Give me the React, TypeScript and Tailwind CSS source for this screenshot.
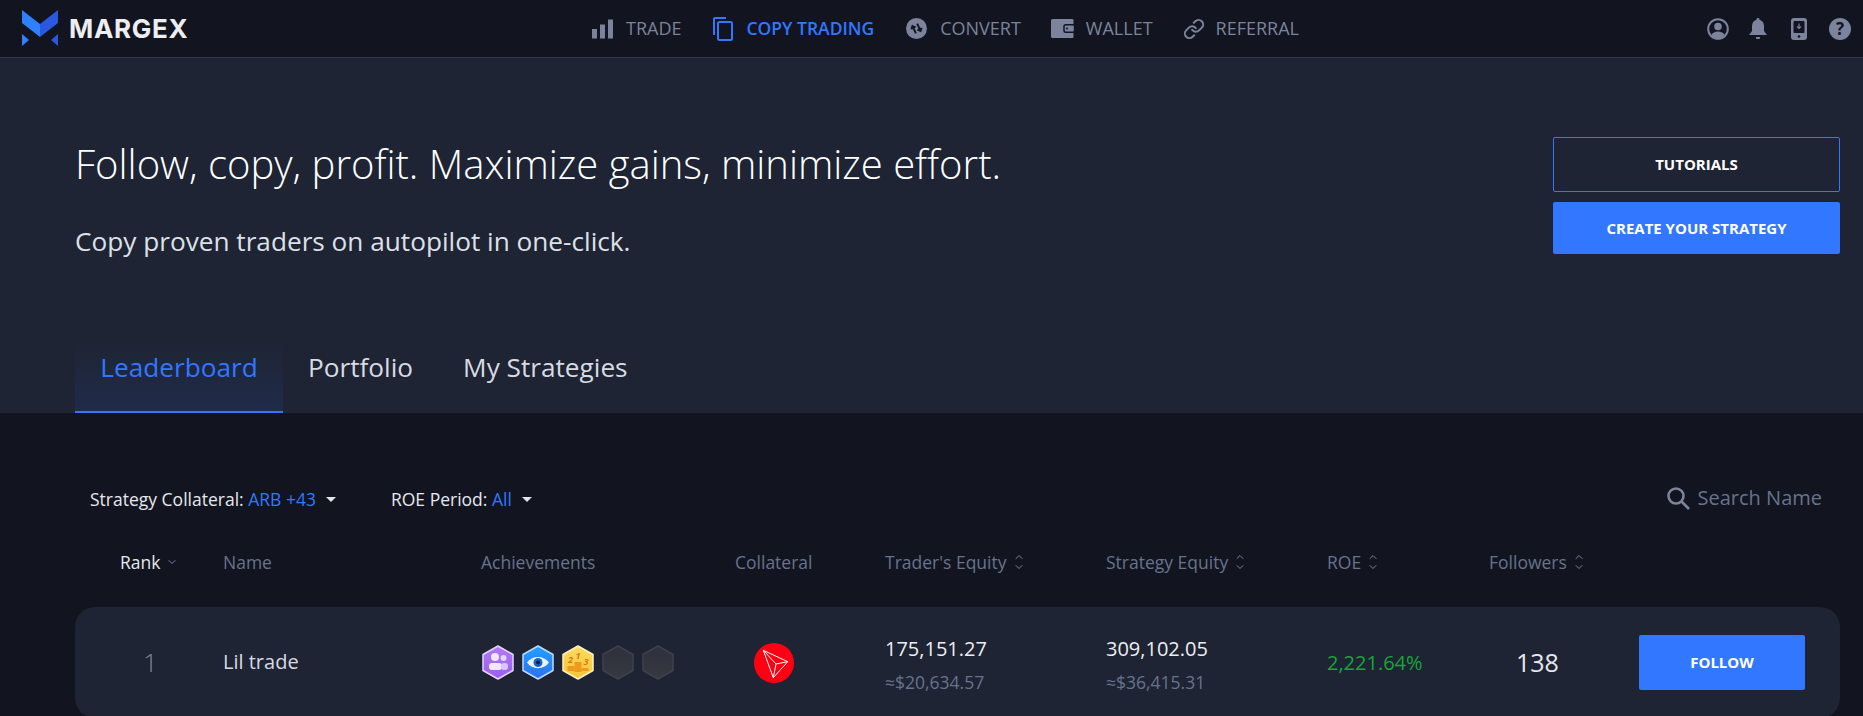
import { ChevronDown, ChevronUp, Link } from 'lucide-react';

const navItems = [
  { label: 'TRADE', icon: <TradeIcon />, spacing: 'gap-[13px]' },
  { label: 'COPY TRADING', icon: <CopyIcon />, active: true, spacing: 'gap-[13px]' },
  { label: 'CONVERT', icon: <ConvertIcon />, spacing: 'gap-[13px]' },
  { label: 'WALLET', icon: <WalletIcon />, spacing: 'gap-[11px] -ml-[2px]' },
  { label: 'REFERRAL', icon: <Link className="w-[22px] h-[22px] text-[#7b849c]" strokeWidth={2.2} />, spacing: 'gap-[11px] -ml-[2px]' },
];

const gridCols = 'grid grid-cols-[148px_258px_254px_150px_221px_221px_162px_150px_1fr] items-center';

function TradeIcon() {
  return (
    <svg width="21" height="20" viewBox="0 0 21 20" fill="#7b849c">
      <rect x="0" y="10" width="5" height="9.500" />
      <rect x="8" y="5.500" width="5" height="14" />
      <rect x="16" y="0.500" width="5" height="19" />
    </svg>
  );
}

function CopyIcon() {
  return (
    <svg width="20" height="24" viewBox="0 0 20 24" fill="none" stroke="#3177ff" strokeWidth="2">
      <path d="M1 18V2a1 1 0 0 1 1-1h11" />
      <rect x="5" y="5" width="14" height="18" rx="1.500" />
    </svg>
  );
}

function ConvertIcon() {
  return (
    <svg width="21" height="21" viewBox="0 0 20 20">
      <circle cx="10" cy="10" r="10" fill="#7b849c" />
      <g transform="rotate(-25 10 10)" fill="none" stroke="#12141f" strokeWidth="1.800">
        <path d="M7.500 14V6.500M5.300 8.600l2.200-2.400 2.200 2.400" />
        <path d="M12.500 6v7.500M10.300 11.400l2.200 2.400 2.200-2.400" />
      </g>
    </svg>
  );
}

function WalletIcon() {
  return (
    <svg width="24" height="19" viewBox="0 0 24 19">
      <path d="M1.500 0H21.500a1 1 0 0 1 1 1V18a1 1 0 0 1-1 1H1.500A1.500 1.500 0 0 1 0 17.500V1.500A1.500 1.500 0 0 1 1.500 0Z" fill="#7b849c" />
      <rect x="13" y="5.800" width="10.500" height="7.400" rx="1.500" fill="#7b849c" stroke="#12141f" strokeWidth="1.500" />
      <circle cx="16" cy="9.500" r="1" fill="#12141f" />
    </svg>
  );
}

function Logo() {
  return (
    <svg width="36" height="37" viewBox="0 0 36 37">
      <path d="M0 0L18 14V27L0 13Z" fill="#2e80ff" />
      <path d="M36 0L18 14V27L36 13Z" fill="#2a58e0" />
      <path d="M0 24L7 30L0 36Z" fill="#2e80ff" />
      <path d="M36 24L29 30L36 36Z" fill="#2a58e0" />
    </svg>
  );
}

function Hexagon({ id, from, to, stroke, children }: { id: string; from: string; to: string; stroke: string; children?: React.ReactNode }) {
  return (
    <svg width="32" height="35" viewBox="0 0 32 35">
      <defs>
        <linearGradient id={id} x1="0" y1="0" x2="0" y2="1">
          <stop offset="0" stopColor={from} />
          <stop offset="1" stopColor={to} />
        </linearGradient>
      </defs>
      <path d="M16 1L31 9.500V25.500L16 34L1 25.500V9.500Z" fill={`url(#${id})`} stroke={stroke} strokeWidth="1.500" strokeLinejoin="round" />
      {children}
    </svg>
  );
}

function SortIcon() {
  return (
    <span className="flex flex-col text-[#7b849c]">
      <ChevronUp className="w-[14px] h-[12px] -mb-[1px]" strokeWidth={2} />
      <ChevronDown className="w-[14px] h-[12px] -mt-[1px]" strokeWidth={2} />
    </span>
  );
}

function Caret() {
  return <span className="ml-[10px] w-0 h-0 border-x-[5px] border-x-transparent border-t-[5px] border-t-[#e2e5ec]" />;
}

function HeaderCell({ label }: { label: string }) {
  return (
    <div className="flex items-center gap-[5px] text-[17.500px] text-[#67738d]">
      {label}
      <SortIcon />
    </div>
  );
}

export default function App() {
  return (
    <div className="h-[716px] overflow-hidden bg-[#12141f] font-['Open_Sans',sans-serif] text-[#e6e8ee]">
      <header className="h-[58px] flex items-center border-b border-[#30374a] relative">
        <div className="flex items-center ml-[22px] gap-[11px]">
          <Logo />
          <span className="font-['Inter',sans-serif] font-bold text-[26px] tracking-[0.700px] text-[#eceef2]">MARGEX</span>
        </div>
        <nav className="absolute left-[592px] top-0 h-[57px] flex items-center gap-[32px]">
          {navItems.map((item) => (
            <div key={item.label} className={`flex items-center ${item.spacing}`}>
              {item.icon}
              <span className={`${item.active ? 'text-[17.500px] text-[#3177ff] font-semibold' : 'text-[18px] text-[#7b849c]'}`}>{item.label}</span>
            </div>
          ))}
        </nav>
        <div className="ml-auto mr-[12px] flex items-center">
          <svg width="22" height="22" viewBox="0 0 22 22">
            <circle cx="11" cy="11" r="9.800" fill="none" stroke="#7b849c" strokeWidth="2" />
            <circle cx="11" cy="8.500" r="3.800" fill="#7b849c" />
            <path d="M4.200 17.500C5.500 14.500 8 13.500 11 13.500s5.500 1 6.800 4A9.800 9.800 0 0 1 4.200 17.500Z" fill="#7b849c" />
          </svg>
          <svg className="ml-[20px]" width="18" height="22" viewBox="0 0 18 22" fill="#7b849c">
            <path d="M9 0a1.500 1.500 0 0 1 1.500 1.700C13.500 2.500 15 5 15 8v5l3 4H0l3-4V8c0-3 1.500-5.500 4.500-6.300A1.500 1.500 0 0 1 9 0Z" />
            <rect x="6.800" y="19" width="4.400" height="2" rx="1" />
          </svg>
          <svg className="ml-[24px]" width="16" height="22" viewBox="0 0 16 22">
            <rect x="0" y="0" width="16" height="22" rx="3" fill="#7b849c" />
            <rect x="2.500" y="3" width="11" height="12" rx="1" fill="#12141f" />
            <path d="M8 5.500V10M6 8.500l2 2 2-2" stroke="#7b849c" strokeWidth="1.200" fill="none" />
            <circle cx="8" cy="18.500" r="1.300" fill="#12141f" />
          </svg>
          <div className="ml-[22px] w-[22px] h-[22px] rounded-full bg-[#7b849c] flex items-center justify-center text-[#12141f] font-bold text-[17px]">?</div>
        </div>
      </header>

      <section className="h-[355px] bg-[#1e2433] pl-[75px] pr-[23px] flex flex-col">
        <div className="flex justify-between pt-[79px]">
          <div>
            <h1 className="text-[40px] font-light leading-[50px] text-white mt-[2px]">Follow, copy, profit. Maximize gains, minimize effort.</h1>
            <p className="text-[26.200px] leading-[36px] mt-[34px] text-[#dde0e7]">Copy proven traders on autopilot in one-click.</p>
          </div>
          <div className="w-[287px] flex flex-col gap-[10px]">
            <button className="h-[55px] border border-[#3177ff] rounded-[2px] text-[15px] font-bold text-white">TUTORIALS</button>
            <button className="h-[52px] bg-[#3177ff] rounded-[2px] text-[15px] font-bold text-white">CREATE YOUR STRATEGY</button>
          </div>
        </div>
        <div className="mt-auto flex items-stretch text-[26.200px] h-[74px]">
          <div className="w-[208px] flex justify-center pt-[9px] text-[#3177ff] border-b-2 border-[#3177ff] bg-gradient-to-b from-[#1e2433] to-[#1f2b49]">Leaderboard</div>
          <div className="ml-[25px] pt-[9px] text-[#d7dae2]">Portfolio</div>
          <div className="ml-[50px] pt-[9px] text-[#d7dae2]">My Strategies</div>
        </div>
      </section>

      <div className="pl-[90px] pr-[41px] pt-[74px] flex items-center h-[98px] text-[17.500px]">
        <span>Strategy Collateral:&nbsp;<span className="text-[#3177ff]">ARB +43</span></span>
        <Caret />
        <span className="ml-[55px]">ROE Period:&nbsp;<span className="text-[#3177ff]">All</span></span>
        <Caret />
        <div className="ml-auto flex items-center gap-[8px] text-[20px] text-[#67738d] -translate-y-[1px]">
          <svg width="24" height="24" viewBox="0 0 24 24" fill="none" stroke="#7b849c" strokeWidth="2.600">
            <circle cx="10" cy="10" r="7.500" />
            <path d="M15.500 15.500L23 23" />
          </svg>
          Search Name
        </div>
      </div>

      <div className={`${gridCols} ml-[75px] mr-[23px] mt-[38px] h-[24px]`}>
        <div className="pl-[45px] flex items-center gap-[6px] text-[17.500px] text-[#e6e8ee]">
          Rank
          <ChevronDown className="w-3 h-3 text-[#7b849c]" />
        </div>
        <div className="text-[17.500px] text-[#67738d]">Name</div>
        <div className="text-[17.500px] text-[#67738d]">Achievements</div>
        <div className="text-[17.500px] text-[#67738d]">Collateral</div>
        <HeaderCell label="Trader's Equity" />
        <HeaderCell label="Strategy Equity" />
        <HeaderCell label="ROE" />
        <HeaderCell label="Followers" />
        <div />
      </div>

      <div className={`${gridCols} ml-[75px] mr-[23px] mt-[34px] h-[111px] rounded-[20px] bg-[#1e2433]`}>
        <div className="pl-[68px] text-[26px] font-light text-[#7b849c]">1</div>
        <div className="text-[20px] text-[#d7dae2] -translate-y-[1px]">Lil trade</div>
        <div className="flex gap-[8px] ml-[1px]">
          <Hexagon id="hexPurple" from="#b27bf8" to="#9a5cf0" stroke="#e6d5ff">
            <circle cx="13" cy="12" r="4" fill="#f1e8ff" />
            <circle cx="21.500" cy="13" r="3" fill="#e3d3ff" />
            <rect x="7" y="18" width="13" height="7" rx="3" fill="#f1e8ff" />
            <rect x="19" y="18" width="7" height="7" rx="3" fill="#d9c5ff" />
          </Hexagon>
          <Hexagon id="hexBlue" from="#21a2ff" to="#2b6ff0" stroke="#b9dbff">
            <path d="M5 17.500C10 10 22 10 27 17.500C22 25 10 25 5 17.500Z" fill="#e8f4ff" />
            <circle cx="16" cy="17.500" r="4.500" fill="#1666c9" />
            <circle cx="16" cy="17.500" r="2" fill="#0b1c3c" />
          </Hexagon>
          <Hexagon id="hexGold" from="#fbdc5c" to="#f6c437" stroke="#fff1c2">
            <rect x="12.500" y="17" width="7" height="10" fill="#ee9a1f" />
            <rect x="5.500" y="21" width="7" height="5" fill="#ee9a1f" />
            <rect x="19.500" y="23" width="7" height="3" fill="#ee9a1f" />
            <text x="16" y="14" textAnchor="middle" fontSize="9" fontWeight="700" fontStyle="italic" fill="#d9761a">1</text>
            <text x="8.500" y="18" textAnchor="middle" fontSize="9" fontWeight="700" fontStyle="italic" fill="#d9761a">2</text>
            <text x="24" y="20" textAnchor="middle" fontSize="9" fontWeight="700" fontStyle="italic" fill="#d9761a">3</text>
          </Hexagon>
          <Hexagon id="hexEmptyA" from="#2e313b" to="#363842" stroke="#3e414c" />
          <Hexagon id="hexEmptyB" from="#2e313b" to="#363842" stroke="#3e414c" />
        </div>
        <div className="pl-[19px]">
          <svg width="40" height="40" viewBox="0 0 40 40">
            <circle cx="20" cy="20" r="20" fill="#ff0013" />
            <path d="M9.300 7.300L33.700 18.700L19.300 34.700ZM9.300 7.300L22 21L19.300 34.700M22 21L33.700 18.700" fill="none" stroke="#fff" strokeWidth="1" strokeLinejoin="round" />
          </svg>
        </div>
        <div className="pt-[5px]">
          <div className="text-[20px] leading-[24px] text-[#eceef2]">175,151.27</div>
          <div className="text-[17.500px] leading-[22px] mt-[10px] text-[#67738d]">≈$20,634.57</div>
        </div>
        <div className="pt-[5px]">
          <div className="text-[20px] leading-[24px] text-[#eceef2]">309,102.05</div>
          <div className="text-[17.500px] leading-[22px] mt-[10px] text-[#67738d]">≈$36,415.31</div>
        </div>
        <div className="text-[20px] text-[#17a43a]">2,221.64%</div>
        <div className="pl-[27px] text-[25px] text-[#e6e8ee]">138</div>
        <button className="w-[166px] h-[55px] bg-[#3177ff] rounded-[2px] text-[15px] font-bold text-white">FOLLOW</button>
      </div>
    </div>
  );
}
